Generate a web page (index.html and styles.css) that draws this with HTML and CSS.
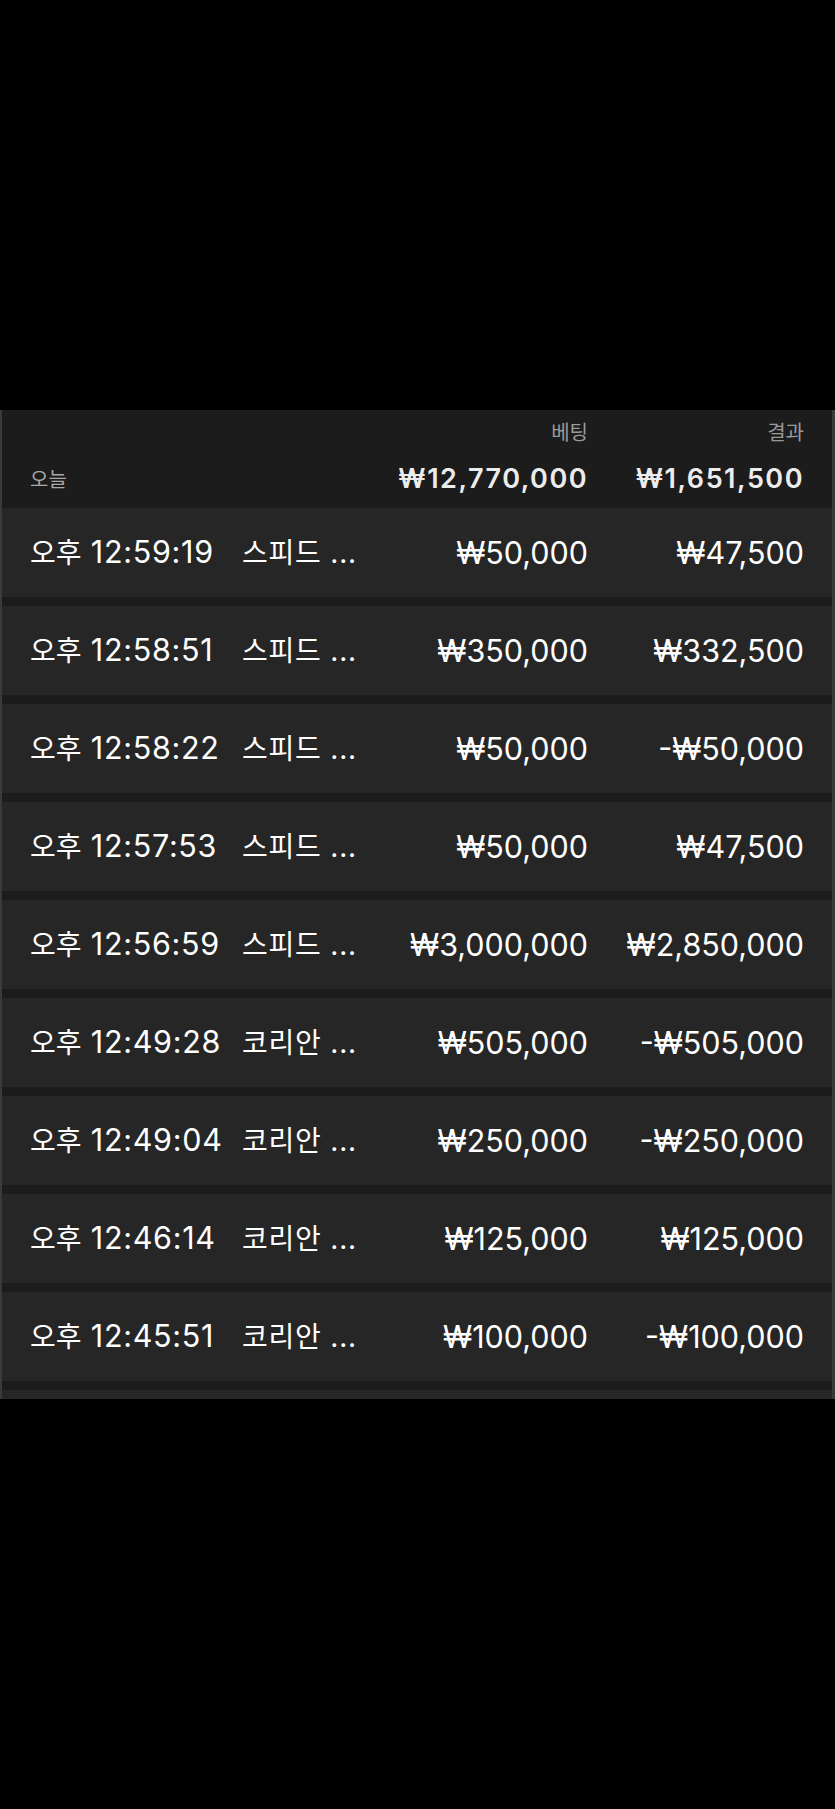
FILE: index.html
```html
<!DOCTYPE html>
<html lang="ko">
<head>
    <meta charset="UTF-8">
    <meta name="viewport" content="width=device-width, initial-scale=1.0">
    <title>베팅 내역</title>
    <link rel="stylesheet" href="styles.css">
</head>
<body>
    <div class="panel">
        <div class="summary">
            <span class="label col-bet">베팅</span>
            <span class="label col-result">결과</span>
            <span class="day">오늘</span>
            <span class="total col-bet">₩12,770,000</span>
            <span class="total col-result">₩1,651,500</span>
        </div>

        <div class="rows">
            <div class="row">
                <span class="time"><span class="ko">오후</span> 12:59:19</span>
                <span class="game">스피드 ...</span>
                <span class="amount">₩50,000</span>
                <span class="amount">₩47,500</span>
            </div>
            <div class="row">
                <span class="time"><span class="ko">오후</span> 12:58:51</span>
                <span class="game">스피드 ...</span>
                <span class="amount">₩350,000</span>
                <span class="amount">₩332,500</span>
            </div>
            <div class="row">
                <span class="time"><span class="ko">오후</span> 12:58:22</span>
                <span class="game">스피드 ...</span>
                <span class="amount">₩50,000</span>
                <span class="amount">-₩50,000</span>
            </div>
            <div class="row">
                <span class="time"><span class="ko">오후</span> 12:57:53</span>
                <span class="game">스피드 ...</span>
                <span class="amount">₩50,000</span>
                <span class="amount">₩47,500</span>
            </div>
            <div class="row">
                <span class="time"><span class="ko">오후</span> 12:56:59</span>
                <span class="game">스피드 ...</span>
                <span class="amount">₩3,000,000</span>
                <span class="amount">₩2,850,000</span>
            </div>
            <div class="row">
                <span class="time"><span class="ko">오후</span> 12:49:28</span>
                <span class="game">코리안 ...</span>
                <span class="amount">₩505,000</span>
                <span class="amount">-₩505,000</span>
            </div>
            <div class="row">
                <span class="time"><span class="ko">오후</span> 12:49:04</span>
                <span class="game">코리안 ...</span>
                <span class="amount">₩250,000</span>
                <span class="amount">-₩250,000</span>
            </div>
            <div class="row">
                <span class="time"><span class="ko">오후</span> 12:46:14</span>
                <span class="game">코리안 ...</span>
                <span class="amount">₩125,000</span>
                <span class="amount">₩125,000</span>
            </div>
            <div class="row">
                <span class="time"><span class="ko">오후</span> 12:45:51</span>
                <span class="game">코리안 ...</span>
                <span class="amount">₩100,000</span>
                <span class="amount">-₩100,000</span>
            </div>
            <!-- next row only peeks in at the bottom edge -->
            <div class="row"></div>
        </div>
    </div>
</body>
</html>
```

FILE: styles.css
```css
body {
    margin: 0;
    padding-top: 410px;
    background-color: #000;
    font-family: Inter, "Noto Sans CJK KR", sans-serif;
    color: #fff;
}

.panel {
    height: 989px;
    overflow: hidden;
    background-color: #1c1c1c;
    border-left: 2px solid #3a3a3a;
    border-right: 3px solid #3a3a3a;
}

.summary,
.row {
    display: grid;
    grid-template-columns: 213px 130px 216px 216px;
    padding: 0 30px 0 27px;
}

.summary {
    height: 98px;
    box-sizing: border-box;
    padding-top: 6px;
    align-items: baseline;
}

.label {
    grid-row: 1;
    font-size: 20px;
    color: #9a9a9a;
    line-height: 34px;
}

.day {
    grid-row: 2;
    grid-column: 1;
    font-size: 20px;
    color: #a8a8a8;
    padding-left: 1px;
    position: relative;
    top: -1px;
}

.total {
    grid-row: 2;
    font-size: 27px;
    font-weight: 600;
    letter-spacing: 1.5px;
    color: #ececec;
    line-height: 44px;
}

.col-bet {
    grid-column: 3;
    text-align: right;
}

.col-result {
    grid-column: 4;
    text-align: right;
}

.rows {
    display: flex;
    flex-direction: column;
    gap: 9px;
}

.row {
    flex: none;
    height: 89px;
    align-items: center;
    background-color: #262626;
    font-size: 30.5px;
    line-height: 36px;
}

.time {
    padding-left: 1px;
    letter-spacing: 0.7px;
    white-space: nowrap;
}

.ko,
.game {
    font-size: 28px;
    letter-spacing: 0;
}

.game {
    letter-spacing: 0.8px;
    white-space: nowrap;
}

.amount {
    text-align: right;
    white-space: nowrap;
}
```
